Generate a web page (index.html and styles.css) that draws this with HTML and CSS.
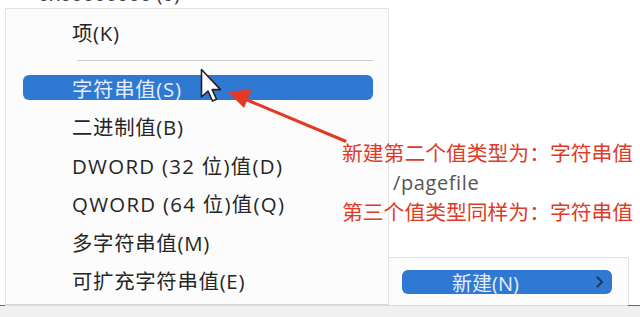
FILE: index.html
```html
<!DOCTYPE html>
<html lang="zh-CN">
<head>
<meta charset="utf-8">
<title>新建字符串值</title>
<link rel="stylesheet" href="styles.css">
</head>
<body>
<div class="screen">
  <div class="work">
    <div class="top-line"><span class="value-text">0x00000000 (0)</span></div>
    <div class="menus">
      <div class="submenu">
        <div class="item">项(K)</div>
        <div class="sep"></div>
        <div class="item active"><span class="bar">字符串值(S)</span></div>
        <div class="item">二进制值(B)</div>
        <div class="item latin">DWORD (32 位)值(D)</div>
        <div class="item latin">QWORD (64 位)值(Q)</div>
        <div class="item">多字符串值(M)</div>
        <div class="item">可扩充字符串值(E)</div>
      </div>
      <div class="parent-menu">
        <div class="pbar"><span class="plabel">新建(N)</span><svg class="chev" width="8" height="12" viewBox="0 0 8 12"><path d="M1.5 1.5 L6 6 L1.5 10.5" fill="none" stroke="#1e3a63" stroke-width="2.2" stroke-linecap="round" stroke-linejoin="round"/></svg></div>
      </div>
    </div>
  </div>
  <div class="strip"><span class="edge"></span><span class="mid"></span><span class="edge right"></span></div>

  <div class="note">
    <div class="red">新建第二个值类型为：字符串值</div>
    <div class="gray">/pagefile</div>
    <div class="red">第三个值类型同样为：字符串值</div>
  </div>

  <svg class="arrow" width="640" height="317" viewBox="0 0 640 317">
    <line x1="345" y1="141" x2="240" y2="97" stroke="#e23a26" stroke-width="3.2" stroke-linecap="round"/>
    <polygon points="228,92 252,89 244,108" fill="#e23a26"/>
  </svg>

  <svg class="cursor" width="26" height="38" viewBox="0 0 26 38">
    <path d="M1.5 1.5 L1.5 29 L8 23 L12.5 33 L16.5 31.3 L12.2 21.6 L20.5 21.6 Z" fill="#fff" stroke="#222" stroke-width="1.6" stroke-linejoin="round"/>
  </svg>
</div>
</body>
</html>
```

FILE: styles.css
```css
* { box-sizing: border-box; }
html, body { margin: 0; padding: 0; background: #fff; }
body { font-family: "Open Sans", "Noto Sans CJK SC", sans-serif; }
.screen {
  position: relative;
  width: 640px;
  height: 317px;
  overflow: hidden;
  background: #fff;
}
.work { height: 305px; display: flex; flex-direction: column; }
.top-line { height: 8px; padding-left: 38px; overflow: visible; }
.value-text {
  display: block;
  margin-top: -19px;
  font-size: 20px;
  line-height: 26px;
  color: #3a3a3a;
}
.menus { flex: 1; display: flex; align-items: flex-end; padding-left: 5px; }
.submenu {
  width: 384px;
  height: 297px;
  background: #fcfcfc;
  border: 1px solid #e4e4e4;
  border-bottom-color: #d8d8d8;
  padding-top: 4px;
}
.item {
  height: 38.5px;
  display: flex;
  align-items: center;
  padding-left: 66px;
  font-size: 20.4px;
  color: #262626;
  letter-spacing: 0.7px;
}
.item.latin { letter-spacing: 1.3px; }
.sep {
  height: 1px;
  background: #cfcfcf;
  margin: 8px 15px 8px 71px;
}
.item.active { padding-left: 17px; padding-right: 15px; }
.bar {
  flex: 1;
  height: 25px;
  display: flex;
  align-items: center;
  padding-left: 49px;
  background: #2f79d2;
  border-radius: 6px;
  color: #e4edf9;
}
.parent-menu {
  width: 240px;
  height: 48px;
  background: #fcfcfc;
  border-top: 1px solid #e2e2e2;
  border-right: 1px solid #e2e2e2;
  padding: 12px 16px 0 13px;
}
.pbar {
  height: 24px;
  background: #2f79d2;
  border-radius: 6px;
  display: flex;
  align-items: center;
  color: #e4edf9;
  font-size: 20px;
  padding-left: 50px;
  padding-right: 8px;
}
.plabel { flex: 1; }
.chev { display: block; }
.strip { height: 12px; display: flex; background: #f0f0f0; }
.strip .edge { width: 5px; border-top: 1px solid #6a6a6a; }
.strip .mid { flex: 1; border-top: 1px solid #dcdcdc; }
.strip .edge.right { width: 12px; }
.note {
  position: absolute;
  left: 342px;
  top: 138px;
  display: flex;
  flex-direction: column;
  font-family: "Noto Sans CJK SC", sans-serif;
  font-size: 20.8px;
  line-height: 29.5px;
}
.note .red { color: #e03a28; }
.note .gray { color: #555; padding-left: 51px; font-family: "Open Sans", sans-serif; font-size: 20px; letter-spacing: 0.6px; }
.arrow { position: absolute; left: 0; top: 0; }
.cursor { position: absolute; left: 200px; top: 68px; }
```
